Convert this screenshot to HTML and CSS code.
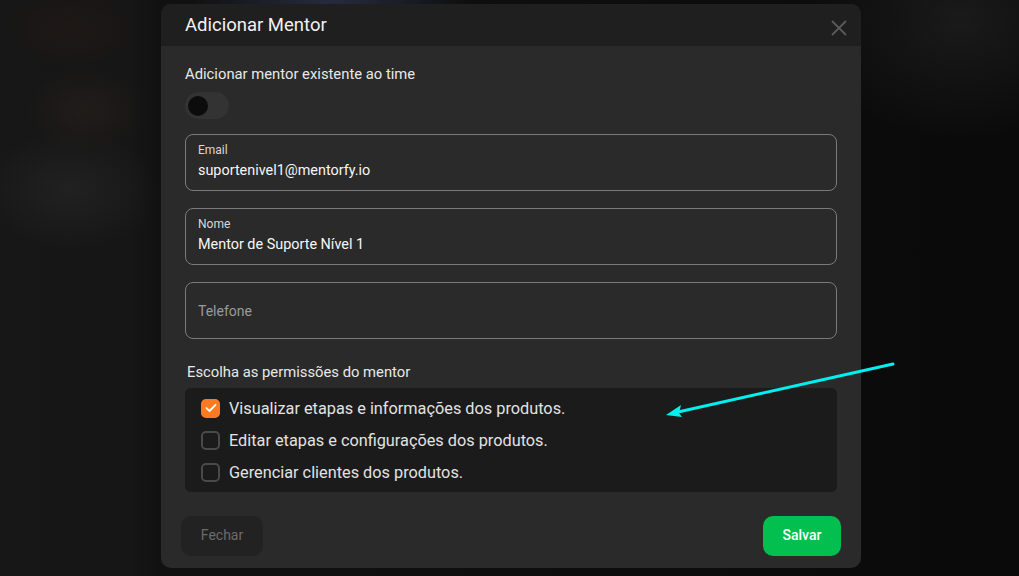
FILE: index.html
```html
<!DOCTYPE html>
<html lang="pt-BR">
<head>
<meta charset="utf-8">
<title>Adicionar Mentor</title>
<link rel="stylesheet" href="styles.css">
</head>
<body>
<div class="backdrop"></div>
<div class="page">
  <div class="modal">
    <div class="modal-header">
      <h2 class="modal-title">Adicionar Mentor</h2>
      <button class="close-btn" aria-label="Fechar">
        <svg width="16" height="16" viewBox="0 0 16 16"><path d="M1.5 1.5 L14.5 14.5 M14.5 1.5 L1.5 14.5" stroke="#5a5a5a" stroke-width="1.8" fill="none" stroke-linecap="round"/></svg>
      </button>
    </div>
    <div class="modal-body">
      <div class="section-label">Adicionar mentor existente ao time</div>
      <div class="toggle"><span class="knob"></span></div>

      <div class="field">
        <div class="field-label">Email</div>
        <div class="field-value">suportenivel1@mentorfy.io</div>
      </div>
      <div class="field">
        <div class="field-label">Nome</div>
        <div class="field-value">Mentor de Suporte Nível 1</div>
      </div>
      <div class="field field-empty">
        <div class="field-placeholder">Telefone</div>
      </div>

      <div class="perm-label">Escolha as permissões do mentor</div>
      <div class="perm-box">
        <div class="perm-row">
          <span class="checkbox checked">
            <svg width="12" height="10" viewBox="0 0 12 10"><path d="M1.5 5.2 L4.5 8 L10.5 1.8" stroke="#fff" stroke-width="1.8" fill="none" stroke-linecap="round" stroke-linejoin="round"/></svg>
          </span>
          <span class="perm-text">Visualizar etapas e informações dos produtos.</span>
        </div>
        <div class="perm-row">
          <span class="checkbox"></span>
          <span class="perm-text">Editar etapas e configurações dos produtos.</span>
        </div>
        <div class="perm-row">
          <span class="checkbox"></span>
          <span class="perm-text">Gerenciar clientes dos produtos.</span>
        </div>
      </div>
    </div>
    <div class="modal-footer">
      <button class="btn btn-close">Fechar</button>
      <button class="btn btn-save">Salvar</button>
    </div>
  </div>
</div>
<svg class="annotation" width="1019" height="576" viewBox="0 0 1019 576">
  <line x1="893" y1="364" x2="678" y2="412" stroke="#00f0f0" stroke-width="3" stroke-linecap="round"/>
  <path d="M666 415 L681 405 L679 413 L682 417 Z" fill="#00f0f0"/>
</svg>
</body>
</html>
```
FILE: styles.css
```css
* { box-sizing: border-box; }
html, body { margin: 0; padding: 0; }
body {
  width: 1019px;
  height: 576px;
  overflow: hidden;
  background: #0a0a0a;
  font-family: Roboto, "Liberation Sans", Arial, sans-serif;
  color: #e8e8e8;
  position: relative;
}
.backdrop {
  position: absolute;
  inset: 0;
  background:
    radial-gradient(ellipse 140px 40px at 330px 0px, rgba(45,50,75,0.8), transparent 100%),
    radial-gradient(ellipse 70px 40px at 70px 30px, rgba(34,24,20,0.7), transparent 100%),
    radial-gradient(ellipse 60px 45px at 85px 110px, rgba(40,32,28,0.6), transparent 100%),
    radial-gradient(ellipse 90px 60px at 70px 190px, rgba(40,40,40,0.6), transparent 100%),
    radial-gradient(ellipse 160px 120px at 960px 20px, rgba(30,30,30,0.8), transparent 100%),
    linear-gradient(to right, #171717 0px, #161616 130px, #111 161px, #0b0b0b 870px, #0a0a0a 1019px);
}
.page {
  position: relative;
  display: flex;
  justify-content: center;
  padding-top: 4px;
  padding-left: 3px;
}
.modal {
  width: 700px;
  height: 564px;
  background: #2a2a2a;
  border-radius: 10px;
  overflow: hidden;
  display: flex;
  flex-direction: column;
}
.modal-header {
  height: 42px;
  background: #1f1f1f;
  display: flex;
  align-items: center;
  justify-content: space-between;
  padding: 0 14px 0 24px;
}
.modal-title {
  margin: 0;
  font-size: 18.5px;
  font-weight: 400;
  color: #f2f2f2;
}
.close-btn {
  background: none;
  border: 0;
  padding: 0;
  width: 16px;
  height: 16px;
  margin-top: 6px;
  display: flex;
}
.modal-body {
  padding: 18px 24px 0 24px;
  display: flex;
  flex-direction: column;
}
.section-label {
  font-size: 14.8px;
  line-height: 20px;
  font-weight: 400;
  color: #e8e8e8;
}
.toggle {
  margin-top: 8px;
  width: 44px;
  height: 27px;
  border-radius: 14px;
  background: #333;
  display: flex;
  align-items: center;
  padding-left: 3px;
}
.knob {
  width: 20px;
  height: 20px;
  border-radius: 50%;
  background: #0c0c0c;
}
.field {
  margin-top: 15px;
  height: 57px;
  border: 1px solid #7a7a7a;
  border-radius: 8px;
  padding: 8px 12px 0 12px;
}
.field + .field { margin-top: 17px; }
.field-label {
  font-size: 12px;
  line-height: 14px;
  color: #d8d8d8;
}
.field-value {
  margin-top: 4px;
  font-size: 14.4px;
  line-height: 20px;
  font-weight: 400;
  color: #f6f6f6;
}
.field-empty {
  display: flex;
  align-items: center;
  padding-top: 0;
}
.field-placeholder {
  font-size: 14px;
  color: #9a9a9a;
}
.perm-label {
  margin-top: 23px;
  padding-left: 2px;
  font-size: 14.8px;
  line-height: 20px;
  font-weight: 400;
  color: #e8e8e8;
}
.perm-box {
  margin-top: 6px;
  background: #1b1b1b;
  border-radius: 6px;
  padding: 4px 16px;
}
.perm-row {
  height: 32px;
  display: flex;
  align-items: center;
  gap: 9px;
}
.checkbox {
  width: 19px;
  height: 19px;
  border: 2px solid #4a4a4a;
  border-radius: 5px;
  display: flex;
  align-items: center;
  justify-content: center;
}
.checkbox.checked {
  background: #fb7a22;
  border-color: #fb7a22;
}
.perm-text {
  font-size: 16.3px;
  color: #e2e2e2;
}
.modal-footer {
  margin-top: auto;
  padding: 0 20px 12px 20px;
  display: flex;
  justify-content: space-between;
}
.btn {
  height: 40px;
  border: 0;
  border-radius: 10px;
  font-family: Roboto, "Liberation Sans", Arial, sans-serif;
  font-size: 14px;
  line-height: 16px;
  padding: 0 0 3px 0;
}
.btn-close {
  width: 82px;
  background: #222;
  color: #6b6b6b;
}
.btn-save {
  width: 78px;
  background: #02bf4f;
  color: #fff;
  font-weight: 500;
}
.annotation {
  position: absolute;
  left: 0;
  top: 0;
  pointer-events: none;
}
```
